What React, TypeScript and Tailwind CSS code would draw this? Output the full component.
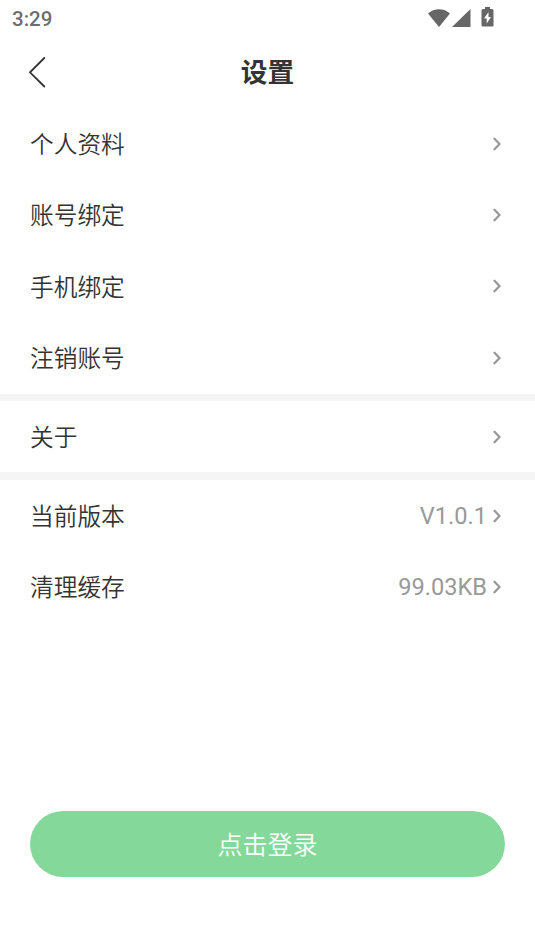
import React from "react";

type Item = { label: string; value?: string };

const groups: Item[][] = [
    [
        { label: "个人资料" },
        { label: "账号绑定" },
        { label: "手机绑定" },
        { label: "注销账号" },
    ],
    [{ label: "关于" }],
    [
        { label: "当前版本", value: "V1.0.1" },
        { label: "清理缓存", value: "99.03KB" },
    ],
];

const StatusBar = () => (
    <div className="flex h-9 items-center justify-between pl-3 pr-[41px]">
        <span className="pt-0.5 text-[20.5px] leading-6 font-medium text-[#6e6e6e]">
            3:29
        </span>
        <div className="flex items-center text-[#666666]">
            <svg width="22" height="18" viewBox="0 0 22 18" fill="currentColor">
                <path d="M0 4.5C6 -1.2 16 -1.2 22 4.5L11 18Z" />
            </svg>
            <svg
                className="ml-0.5"
                width="19"
                height="18"
                viewBox="0 0 19 18"
                fill="currentColor"
            >
                <path d="M18.5 0V18H0Z" />
            </svg>
            <svg
                className="ml-2.5 -mt-0.5"
                width="13"
                height="20"
                viewBox="0 0 13 20"
                fill="currentColor"
            >
                <path
                    fillRule="evenodd"
                    d="M4 0H9V2H11Q12.5 2 12.5 3.5V18.5Q12.5 19.5 11.5 19.5H1.5Q0.5 19.5 0.5 18.5V3.5Q0.5 2 2 2H4ZM7.5 5L3 11.5H5.7V16.5L10 10H7.5Z"
                />
            </svg>
        </div>
    </div>
);

const Chevron = () => (
    <svg width="9" height="14" viewBox="0 0 9 14" fill="none">
        <path
            d="M2.5 1.8L7.5 7L2.5 12.2"
            stroke="#999999"
            strokeWidth="2.3"
            strokeLinecap="round"
        />
    </svg>
);

const Row = ({ label, value }: Item) => (
    <li className="flex h-[71.4px] items-center bg-white pl-[30px] pr-[34px]">
        <span className="flex-1 pt-1 text-[23.7px] font-[350] text-[#333333]">
            {label}
        </span>
        {value && (
            <span className="mr-[5px] pt-0.5 text-[23.6px] text-[#999999]">
                {value}
            </span>
        )}
        <Chevron />
    </li>
);

const App = () => (
    <div className="flex h-[951px] w-[535px] flex-col overflow-hidden bg-white font-['Roboto','Noto_Sans_CJK_SC',sans-serif]">
        <StatusBar />
        <header className="grid h-[72px] grid-cols-3 items-center">
            <svg
                className="ml-7"
                width="18"
                height="32"
                viewBox="0 0 18 32"
                fill="none"
            >
                <path
                    d="M16.3 2L2 16.3L16.3 30.5"
                    stroke="#333333"
                    strokeWidth="1.8"
                    strokeLinecap="round"
                />
            </svg>
            <h1 className="pt-[3px] text-center text-[26.7px] font-bold text-[#333333]">
                设置
            </h1>
        </header>
        <main className="flex flex-col gap-[7.5px] bg-[#f5f5f5]">
            {groups.map((items, idx) => (
                <ul key={idx}>
                    {items.map((item) => (
                        <Row key={item.label} {...item} />
                    ))}
                </ul>
            ))}
        </main>
        <button className="mx-[30px] mt-auto mb-[74px] h-[66px] shrink-0 rounded-full bg-[#84d99a] pt-1 text-[25px] font-[350] text-white">
            点击登录
        </button>
    </div>
);

export default App;
